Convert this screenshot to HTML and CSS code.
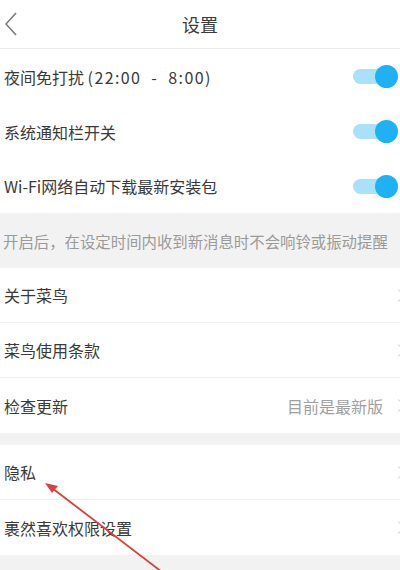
FILE: index.html
```html
<!DOCTYPE html>
<html lang="zh">
<head>
<meta charset="utf-8">
<link rel="stylesheet" href="styles.css">
</head>
<body>
<div class="page">
  <header class="topbar">
    <svg class="back" width="14" height="26" viewBox="0 0 14 26"><polyline points="11,1 1,12 11,23" fill="none" stroke="#7a7a7a" stroke-width="1.6"/></svg>
    <div class="title">设置</div>
  </header>

  <div class="row toggle-row r55"><span class="label">夜间免打扰 <span class="time">(22:00 &nbsp;- &nbsp;8:00)</span></span><span class="switch"><span class="track"></span><span class="knob"></span></span></div>
  <div class="row toggle-row r55"><span class="label">系统通知栏开关</span><span class="switch"><span class="track"></span><span class="knob"></span></span></div>
  <div class="row toggle-row r54"><span class="label">Wi-Fi网络自动下载最新安装包</span><span class="switch"><span class="track"></span><span class="knob"></span></span></div>

  <div class="desc">开启后，在设定时间内收到新消息时不会响铃或振动提醒</div>

  <div class="row link-row bordered"><span class="label">关于菜鸟</span><span class="chev"></span></div>
  <div class="row link-row bordered"><span class="label">菜鸟使用条款</span><span class="chev"></span></div>
  <div class="row link-row"><span class="label">检查更新</span><span class="right"><span class="value">目前是最新版</span><span class="chev"></span></span></div>

  <div class="gap"></div>

  <div class="row link-row bordered"><span class="label">隐私</span><span class="chev"></span></div>
  <div class="row link-row"><span class="label">裹然喜欢权限设置</span><span class="chev"></span></div>

  <div class="foot"></div>

  <svg class="arrow" width="400" height="570" viewBox="0 0 400 570">
    <line x1="162" y1="572" x2="52" y2="488" stroke="#d9403f" stroke-width="1.8"/>
    <polygon points="45,483 58,486 52,493" fill="#d9403f"/>
  </svg>
</div>
</body>
</html>
```

FILE: styles.css
```css
html, body {
  margin: 0;
  padding: 0;
  background: #ffffff;
}
body {
  font-family: "Noto Sans CJK SC", "Noto Sans", sans-serif;
  color: #3a3a3a;
}
.page {
  position: relative;
  width: 400px;
  height: 570px;
  overflow: hidden;
}
.topbar {
  height: 48px;
  border-bottom: 1px solid #ececec;
  display: flex;
  align-items: center;
  justify-content: center;
  position: relative;
}
.back {
  position: absolute;
  left: 5px;
  top: 12px;
}
.title {
  font-size: 18px;
  color: #3c3c3c;
}
.row {
  display: flex;
  align-items: center;
  justify-content: space-between;
  padding: 0 0 0 4px;
  font-size: 16px;
  box-sizing: border-box;
  height: 55px;
}
.time {
  letter-spacing: 1.4px;
}
.r54 { height: 54px; }
.toggle-row {
  padding-right: 2px;
}
.switch {
  position: relative;
  width: 45px;
  height: 23px;
}
.track {
  position: absolute;
  left: 0;
  top: 4px;
  width: 38px;
  height: 15px;
  border-radius: 8px;
  background: #a9e1fa;
}
.knob {
  position: absolute;
  right: 0;
  top: 0;
  width: 23px;
  height: 23px;
  border-radius: 50%;
  background: #1eb1f6;
}
.desc {
  height: 55px;
  background: #f2f2f2;
  color: #9a9a9a;
  font-size: 15.4px;
  display: flex;
  align-items: center;
  padding-left: 3px;
  box-sizing: border-box;
  white-space: nowrap;
  overflow: hidden;
}
.link-row {
  padding-right: 0;
}
.bordered {
  border-bottom: 1px solid #efefef;
}
.right {
  display: flex;
  align-items: center;
}
.value {
  color: #a0a0a0;
  font-size: 16px;
  margin-right: 11px;
}
.chev {
  width: 8px;
  height: 8px;
  border-top: 1.5px solid #cfcfcf;
  border-right: 1.5px solid #cfcfcf;
  transform: rotate(45deg);
  margin-right: -3px;
}
.gap {
  height: 12px;
  background: #f2f2f2;
}
.foot {
  height: 15px;
  background: #f2f2f2;
}
.arrow {
  position: absolute;
  left: 0;
  top: 0;
  pointer-events: none;
}
```
